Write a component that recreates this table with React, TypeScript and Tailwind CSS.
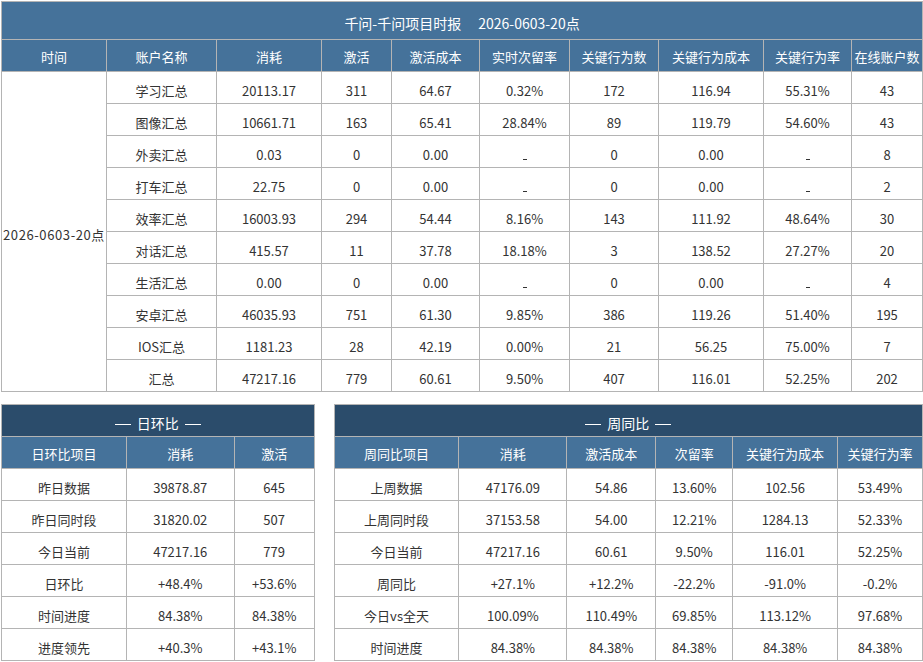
import * as React from 'react'

const font = "font-['Noto_Sans_CJK_SC','Noto_Sans',sans-serif]"

const Dash = () => (
  <span className="inline-block w-[4px] h-[1px] bg-[#333] align-baseline" />
)

const v = (x: string) => (x === '-' ? <Dash /> : x)

const topCols = [105, 110, 105, 70, 88, 90, 89, 105, 88, 71]
const topHead = ['时间', '账户名称', '消耗', '激活', '激活成本', '实时次留率', '关键行为数', '关键行为成本', '关键行为率', '在线账户数']
const topRows = [
  ['学习汇总', '20113.17', '311', '64.67', '0.32%', '172', '116.94', '55.31%', '43'],
  ['图像汇总', '10661.71', '163', '65.41', '28.84%', '89', '119.79', '54.60%', '43'],
  ['外卖汇总', '0.03', '0', '0.00', '-', '0', '0.00', '-', '8'],
  ['打车汇总', '22.75', '0', '0.00', '-', '0', '0.00', '-', '2'],
  ['效率汇总', '16003.93', '294', '54.44', '8.16%', '143', '111.92', '48.64%', '30'],
  ['对话汇总', '415.57', '11', '37.78', '18.18%', '3', '138.52', '27.27%', '20'],
  ['生活汇总', '0.00', '0', '0.00', '-', '0', '0.00', '-', '4'],
  ['安卓汇总', '46035.93', '751', '61.30', '9.85%', '386', '119.26', '51.40%', '195'],
  ['IOS汇总', '1181.23', '28', '42.19', '0.00%', '21', '56.25', '75.00%', '7'],
  ['汇总', '47217.16', '779', '60.61', '9.50%', '407', '116.01', '52.25%', '202'],
]

const dayCols = [125, 108, 80]
const dayHead = ['日环比项目', '消耗', '激活']
const dayRows = [
  ['昨日数据', '39878.87', '645'],
  ['昨日同时段', '31820.02', '507'],
  ['今日当前', '47217.16', '779'],
  ['日环比', '+48.4%', '+53.6%'],
  ['时间进度', '84.38%', '84.38%'],
  ['进度领先', '+40.3%', '+43.1%'],
]

const weekCols = [125, 108, 89, 77, 105, 85]
const weekHead = ['周同比项目', '消耗', '激活成本', '次留率', '关键行为成本', '关键行为率']
const weekRows = [
  ['上周数据', '47176.09', '54.86', '13.60%', '102.56', '53.49%'],
  ['上周同时段', '37153.58', '54.00', '12.21%', '1284.13', '52.33%'],
  ['今日当前', '47217.16', '60.61', '9.50%', '116.01', '52.25%'],
  ['周同比', '+27.1%', '+12.2%', '-22.2%', '-91.0%', '-0.2%'],
  ['今日vs全天', '100.09%', '110.49%', '69.85%', '113.12%', '97.68%'],
  ['时间进度', '84.38%', '84.38%', '84.38%', '84.38%', '84.38%'],
]

// text sits a little below the middle of each row, as in the source sheet
const th = 'h-[32px] border border-[#b4b4b4] bg-[#45729a] text-white font-normal text-[13px] px-0 pt-[2px] pb-0 text-center align-middle'
const td = 'h-[32px] border border-[#b4b4b4] bg-white text-[#333] text-[13px] px-0 pt-[5px] pb-0 text-center align-middle'

const TitleDash = () => <span className="inline-block w-[16px] h-[1px] bg-white align-middle" />

const SubTable = ({
  title,
  cols,
  head,
  rows,
}: {
  title: string
  cols: number[]
  head: string[]
  rows: string[][]
}) => (
  <table className="table-fixed border-collapse">
    <colgroup>
      {cols.map((w, i) => (
        <col key={i} style={{ width: w }} />
      ))}
    </colgroup>
    <thead>
      <tr>
        <th
          colSpan={cols.length}
          className="h-[32px] border border-[#b4b4b4] bg-[#2b4c6b] text-white font-normal text-[14px] px-0 pt-[4px] pb-0 text-center align-middle"
        >
          <TitleDash />
          <span className="mx-[6px]">{title}</span>
          <TitleDash />
        </th>
      </tr>
      <tr>
        {head.map((h) => (
          <th key={h} className={th}>
            {h}
          </th>
        ))}
      </tr>
    </thead>
    <tbody>
      {rows.map((r, i) => (
        <tr key={i}>
          {r.map((c, j) => (
            <td key={j} className={td}>
              {v(c)}
            </td>
          ))}
        </tr>
      ))}
    </tbody>
  </table>
)

export default function App() {
  return (
    <div className={`${font} w-[923px] h-[662px] bg-white pl-[1px] pt-[1px] leading-none`}>
      {/* 时报主表 */}
      <table className="table-fixed border-collapse w-[921px]">
        <colgroup>
          {topCols.map((w, i) => (
            <col key={i} style={{ width: w }} />
          ))}
        </colgroup>
        <thead>
          <tr>
            <th
              colSpan={10}
              className="h-[38px] border border-[#b4b4b4] bg-[#45729a] text-white font-normal text-[14px] px-0 pt-[4px] pb-0 text-center align-middle"
            >
              <span>千问-千问项目时报</span>
              <span className="ml-[17px]">2026-0603-20点</span>
            </th>
          </tr>
          <tr>
            {topHead.map((h) => (
              <th key={h} className={th}>
                {h}
              </th>
            ))}
          </tr>
        </thead>
        <tbody>
          {topRows.map((r, i) => (
            <tr key={i}>
              {i === 0 && (
                <td rowSpan={10} className={`${td} whitespace-nowrap tracking-[0.6px]`}>
                  2026-0603-20点
                </td>
              )}
              {r.map((c, j) => (
                <td key={j} className={td}>
                  {v(c)}
                </td>
              ))}
            </tr>
          ))}
        </tbody>
      </table>

      {/* 日环比 / 周同比 */}
      <div className="flex items-start gap-[19px] mt-[12px]">
        <SubTable title="日环比" cols={dayCols} head={dayHead} rows={dayRows} />
        <SubTable title="周同比" cols={weekCols} head={weekHead} rows={weekRows} />
      </div>
    </div>
  )
}
